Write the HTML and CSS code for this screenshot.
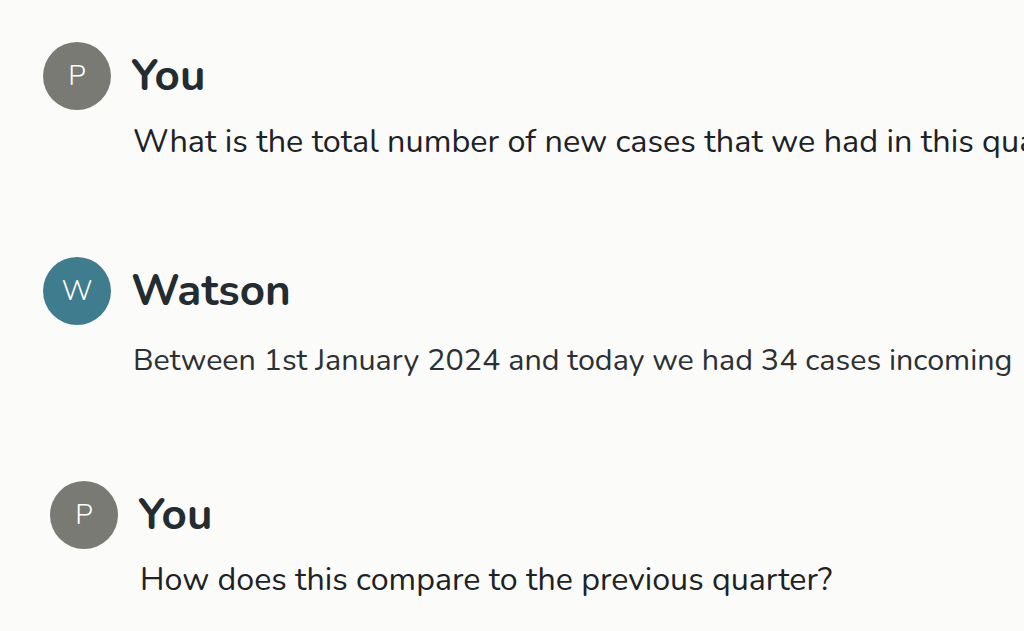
FILE: index.html
```html
<!DOCTYPE html>
<html lang="en">
<head>
<meta charset="utf-8">
<title>Chat</title>
<link rel="stylesheet" href="styles.css">
</head>
<body>
<main class="chat">
  <section class="msg msg--user">
    <div class="msg-head">
      <div class="avatar avatar--user">P</div>
      <h2 class="author">You</h2>
    </div>
    <p class="msg-text">What is the total number of new cases that we had in this quarter?</p>
  </section>
  <section class="msg msg--bot">
    <div class="msg-head">
      <div class="avatar avatar--bot">W</div>
      <h2 class="author">Watson</h2>
    </div>
    <p class="msg-text">Between 1st January 2024 and today we had 34 cases incoming</p>
  </section>
  <section class="msg msg--user msg--indent">
    <div class="msg-head">
      <div class="avatar avatar--user">P</div>
      <h2 class="author">You</h2>
    </div>
    <p class="msg-text">How does this compare to the previous quarter?</p>
  </section>
</main>
</body>
</html>
```

FILE: styles.css
```css
html, body {
  margin: 0;
  padding: 0;
  background: #fbfbf9;
  overflow: hidden;
}

body {
  font-family: "Nunito", "Lato", "Noto Sans", sans-serif;
  color: #232c31;
  width: 1024px;
  height: 631px;
}

.chat {
  display: flex;
  flex-direction: column;
  gap: 96px;
  padding: 42px 0 0 43px;
}

.msg {
  display: flex;
  flex-direction: column;
}

.msg--indent {
  padding-left: 7px;
  margin-top: 5px;
}

.msg-head {
  display: flex;
  align-items: center;
  gap: 20px;
}

.avatar {
  width: 68px;
  height: 68px;
  border-radius: 50%;
  display: flex;
  align-items: center;
  justify-content: center;
  color: #ffffff;
  font-size: 28px;
  font-weight: 300;
  flex-shrink: 0;
}

.avatar--user {
  background: #7a7a74;
}

.avatar--bot {
  background: #3f7d8e;
}

.author {
  margin: 0;
  font-size: 44px;
  font-weight: 700;
  line-height: 1;
  color: #232c31;
}

.msg-text {
  margin: 11px 0 0 90px;
  font-size: 32.4px;
  line-height: 40px;
  white-space: nowrap;
  color: #1c2226;
}

.msg--bot .msg-text {
  margin-top: 15px;
  font-size: 30.5px;
  color: #2b3034;
}

.msg--indent .msg-text {
  margin-top: 10px;
  font-size: 32.2px;
}
```
